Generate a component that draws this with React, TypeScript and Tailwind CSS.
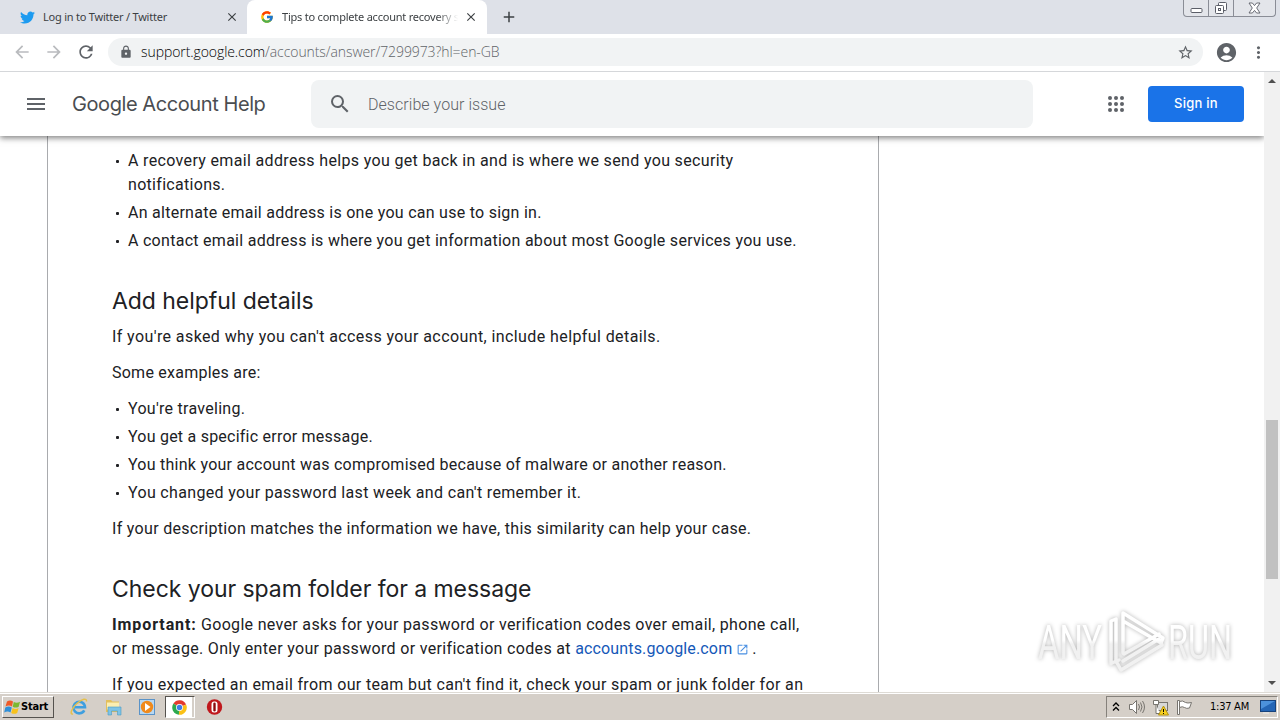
import { useState, type ReactNode } from "react";
import { FaTwitter } from "react-icons/fa";
import { FcGoogle } from "react-icons/fc";
import {
  MdAccountCircle,
  MdAdd,
  MdArrowBack,
  MdArrowForward,
  MdClose,
  MdLock,
  MdMenu,
  MdMoreVert,
  MdOpenInNew,
  MdRefresh,
  MdSearch,
  MdStarBorder,
} from "react-icons/md";

function WindowControls() {
  return (
    <div className="flex h-[17px] w-[93px] rounded-b-[4px] border border-t-0 border-[#8a8d96] bg-[#e3e5ea]">
      <div className="flex w-[25px] items-center justify-center border-r border-[#8a8d96]">
        <svg width="13" height="12" viewBox="0 0 13 12" fill="#fff" stroke="#5b5e68">
          <rect x="1" y="6.5" width="11" height="4" rx="1" />
        </svg>
      </div>
      <div className="flex w-[25px] items-center justify-center border-r border-[#8a8d96]">
        <svg width="14" height="14" viewBox="0 0 14 14" fill="#fff" stroke="#5b5e68">
          <rect x="4.5" y="1.5" width="8" height="8" rx="1" />
          <rect x="1.5" y="4.5" width="8" height="8" rx="1" />
          <rect x="4.5" y="7.5" width="2" height="2" />
        </svg>
      </div>
      <div className="flex flex-1 items-center justify-center">
        <svg width="13" height="12" viewBox="0 0 13 12" fill="#fff" stroke="#5b5e68" strokeWidth=".9">
          <path d="M1 1h3.400l2.100 2.600L8.600 1H12L8.700 6l3.300 5H8.600L6.500 8.400 4.400 11H1l3.300-5z" />
        </svg>
      </div>
    </div>
  );
}

function TabStrip() {
  return (
    <div className="flex h-[34px] bg-[#dee1e8] font-['Noto_Sans','Open_Sans',sans-serif] text-[11px] text-[#3c4043]">
      <div className="flex w-[247px] items-center pl-5">
        <FaTwitter className="size-[15px] text-[#1d9bf0]" />
        <span className="ml-2 w-[182px] whitespace-nowrap tracking-[-0.22px]">Log in to Twitter / Twitter</span>
        <MdClose className="size-[14px] text-[#3c4043]" />
      </div>
      <div className="flex w-[240px] items-center rounded-t-lg bg-white pl-[13px]">
        <FcGoogle className="size-[14px]" />
        <span className="ml-2 w-[176px] overflow-hidden whitespace-nowrap tracking-[-0.22px] [mask-image:linear-gradient(to_right,black_88%,transparent)]">
          Tips to complete account recovery st
        </span>
        <MdClose className="ml-[6px] size-[14px] text-[#3c4043]" />
      </div>
      <div className="flex flex-1 items-center pl-[13px]">
        <MdAdd className="size-[18px] text-[#3c4043]" />
      </div>
      <div className="mr-1">
        <WindowControls />
      </div>
    </div>
  );
}

function Toolbar() {
  return (
    <div className="flex h-[38px] items-center border-b border-[#d5d7da] bg-white pb-px text-[#5f6368]">
      <MdArrowBack className="ml-3 size-5 text-[#b9bbbe]" />
      <MdArrowForward className="ml-3 size-5 text-[#b9bbbe]" />
      <MdRefresh className="ml-3 size-5" />
      <div className="ml-3 flex h-7 w-[1095px] items-center rounded-full bg-[#f1f3f4] pr-[9px] pl-[11px]">
        <MdLock className="size-[14px]" />
        <span className="ml-2 flex-1 pb-px font-['Open_Sans','Noto_Sans',sans-serif] text-[14px] font-light tracking-[-0.08px]">
          <span className="text-[#000]">support.google.com</span>/accounts/answer/7299973?hl=en-GB
        </span>
        <MdStarBorder className="size-[17px]" />
      </div>
      <MdAccountCircle className="ml-3 size-[23px]" />
      <MdMoreVert className="ml-[11px] size-[19px]" />
    </div>
  );
}

function AppsIcon() {
  return (
    <svg width="24" height="24" viewBox="0 0 24 24" fill="#5f6368">
      {[6, 12, 18].map((y) => [6, 12, 18].map((x) => <circle key={`${x}-${y}`} cx={x} cy={y} r="2" />))}
    </svg>
  );
}

function HelpHeader() {
  const [query, setQuery] = useState("");

  return (
    <header className="relative z-10 flex h-16 shrink-0 items-center bg-white shadow-[0_2px_6px_rgba(0,0,0,0.5)]">
      <MdMenu className="ml-6 size-6 text-[#5f6368]" />
      <span className="ml-6 w-[239px] whitespace-nowrap font-[Inter,sans-serif] text-[20px] tracking-[-0.42px] text-[#4a4d51]">
        Google Account Help
      </span>
      <div className="flex h-12 w-[722px] items-center rounded-lg bg-[#f1f3f4] pl-[17px]">
        <MdSearch className="size-6 text-[#5f6368]" />
        <input
          value={query}
          onChange={(e) => setQuery(e.target.value)}
          placeholder="Describe your issue"
          className="ml-4 flex-1 bg-transparent pt-px font-[Roboto,sans-serif] text-[16px] font-light tracking-[0.05px] outline-none placeholder:text-[#5f6368]"
        />
      </div>
      <div className="ml-[71px]">
        <AppsIcon />
      </div>
      <button className="ml-5 h-9 w-24 rounded bg-[#1a73e8] font-[Inter,sans-serif] text-[13px] font-medium tracking-[0.25px] text-white">
        Sign in
      </button>
    </header>
  );
}

function Heading({ children }: { children: ReactNode }) {
  return (
    <h2 className="mt-8 mb-2 font-[Inter,sans-serif] text-[23px] leading-8 tracking-[-0.05px] whitespace-nowrap">
      {children}
    </h2>
  );
}

function Bullet({ children }: { children: ReactNode }) {
  return (
    <li className="flex">
      <span className="mt-[11px] mr-[9px] ml-1 size-[3px] shrink-0 rounded-[1px] bg-[#202124]" />
      <span>{children}</span>
    </li>
  );
}

function Article() {
  return (
    <article className="ml-[47px] w-[832px] shrink-0 border-x border-[#a9abae] pt-[13px] pl-16 font-[Roboto,sans-serif] text-[16px] leading-6 whitespace-nowrap text-[#202124]">
      <ul className="flex flex-col gap-1">
        <Bullet>
          <span className="tracking-[0.34px]">A recovery email address helps you get back in and is where we send you security</span>
          <br />
          <span className="tracking-[0.3px]">notifications.</span>
        </Bullet>
        <Bullet>
          <span className="tracking-[0.265px]">An alternate email address is one you can use to sign in.</span>
        </Bullet>
        <Bullet>
          <span className="tracking-[0.28px]">
            A contact email address is where you get information about most Google services you use.
          </span>
        </Bullet>
      </ul>

      <Heading>Add helpful details</Heading>
      <p className="tracking-[0.405px]">If you're asked why you can't access your account, include helpful details.</p>
      <p className="mt-3 tracking-[0.24px]">Some examples are:</p>
      <ul className="mt-3 flex flex-col gap-1">
        <Bullet>
          <span className="tracking-[0.28px]">You're traveling.</span>
        </Bullet>
        <Bullet>
          <span className="tracking-[0.23px]">You get a specific error message.</span>
        </Bullet>
        <Bullet>
          <span className="tracking-[0.255px]">
            You think your account was compromised because of malware or another reason.
          </span>
        </Bullet>
        <Bullet>
          <span className="tracking-[0.335px]">You changed your password last week and can't remember it.</span>
        </Bullet>
      </ul>
      <p className="mt-3 tracking-[0.31px]">
        If your description matches the information we have, this similarity can help your case.
      </p>

      <Heading>Check your spam folder for a message</Heading>
      <p>
        <span className="tracking-[0.32px]">
          <b className="tracking-[0.9px]">Important:</b> Google never asks for your password or verification codes over
          email, phone call,
        </span>
        <br />
        <span className="tracking-[0.33px]">or message. Only enter your password or verification codes at </span>
        <a href="#" className="tracking-[0.15px] text-[#1558b8]">
          accounts.google.com
          <MdOpenInNew className="mr-[3px] ml-1 inline size-[13px] text-[#4a90e2]" />
        </a>
        .
      </p>
      <p className="mt-3 tracking-[0.35px]">
        If you expected an email from our team but can't find it, check your spam or junk folder for an
      </p>
    </article>
  );
}

function Scrollbar() {
  return (
    <div className="flex w-4 flex-col items-center bg-[#f1f1f1]">
      <svg width="16" height="17" viewBox="0 0 16 17" fill="#505050">
        <path d="M4 11l4-4 4 4z" />
      </svg>
      <div className="mt-[331px] h-[159px] w-3 bg-[#c1c1c1]" />
      <svg className="mt-auto" width="16" height="17" viewBox="0 0 16 17" fill="#505050">
        <path d="M4 6l4 4 4-4z" />
      </svg>
    </div>
  );
}

function Watermark() {
  return (
    <svg
      className="absolute top-[600px] left-[1030px] drop-shadow-[0_0_2px_rgba(0,0,0,0.3)]"
      width="220"
      height="84"
      viewBox="0 -4 220 84"
    >
      <defs>
        <linearGradient id="fade" gradientUnits="userSpaceOnUse" x1="0" y1="36" x2="0" y2="40">
          <stop offset="0" stopColor="#fff" />
          <stop offset="1" stopColor="#f1f1f1" />
        </linearGradient>
      </defs>
      <g fontFamily="Roboto, sans-serif" fontSize="48" fill="url(#fade)">
        <text x="8" y="55" textLength="64" lengthAdjust="spacingAndGlyphs">
          ANY
        </text>
        <text x="138" y="55" textLength="64" lengthAdjust="spacingAndGlyphs">
          RUN
        </text>
      </g>
      <g fill="none" stroke="url(#fade)" strokeWidth="3.500" strokeLinejoin="round" strokeLinecap="round">
        <path d="M81 60V17l5-2v43M82 59l7-3" />
        <path d="M93 49V9l40 25-2 5-38-22" />
        <path d="M94 50l35-20M86 57l5 9 41-25-3-6-36 22" />
      </g>
    </svg>
  );
}

function StartLogo() {
  return (
    <svg width="17" height="16" viewBox="0 0 17 16">
      <path d="M3 2.500q3-2 6 0L8 7.500q-3-2-6.500 0z" fill="#ef5a28" />
      <path d="M9.800 3q3 1.500 6.200-.3l-1.300 5q-3 1.800-6 0z" fill="#7cb82f" />
      <path d="M1.300 8.500q3.300-2 6.500 0l-1.300 5q-3-2-6.300 0z" fill="#2f8fd8" />
      <path d="M8.600 9q3 1.800 6 0l-1.400 5q-3 1.700-6 0z" fill="#f8c21c" />
    </svg>
  );
}

function ExplorerIcon() {
  return (
    <svg width="18" height="18" viewBox="0 0 18 18" fill="none">
      <path d="M14.300 12.300A5.800 5.800 0 1 1 15 9.300H5" stroke="#3f9fdf" strokeWidth="2.600" />
      <path d="M3 16C-1 17 2 9.500 7 5.500 12 1 17-.5 16.500 3.500" stroke="#e5c04c" strokeWidth="1.500" />
    </svg>
  );
}

function FolderIcon() {
  return (
    <svg width="18" height="18" viewBox="0 0 18 18">
      <path d="M2 2h5l1.500 1.500H15V14H2z" fill="#e3bf5c" />
      <path d="M3 4.500h12v7H3z" fill="#fbeeb2" />
      <path d="M4 9h13v8h-3.500v-4H7.500v4H4z" fill="#7ec3e6" stroke="#4b9ac4" strokeWidth=".6" />
    </svg>
  );
}

function PlayerIcon() {
  return (
    <svg width="18" height="18" viewBox="0 0 18 18">
      <rect x="1.500" y="1.500" width="15" height="15" fill="#b8d8f2" stroke="#5a93c8" />
      <circle cx="9" cy="9" r="6.200" fill="#f08a1c" />
      <path d="M7 5l5.500 4L7 13z" fill="#fff" />
    </svg>
  );
}

function ChromeIcon() {
  return (
    <svg width="15" height="15" viewBox="0 0 16 16">
      <path d="M8 8L1.500 3.800A7.700 7.700 0 0 1 15 4.700z" fill="#e33b2e" />
      <path d="M8 8l7-3.300A7.700 7.700 0 0 1 7.300 15.700z" fill="#fbc116" />
      <path d="M8 8l-.7 7.700A7.700 7.700 0 0 1 1.500 3.800z" fill="#2da94f" />
      <circle cx="8" cy="8" r="3.700" fill="#fff" />
      <circle cx="8" cy="8" r="2.900" fill="#3f7ee8" />
    </svg>
  );
}

function OperaIcon() {
  return (
    <svg width="18" height="18" viewBox="0 0 18 18">
      <circle cx="8.500" cy="9" r="7.700" fill="#c0181d" />
      <rect x="5.500" y="3.500" width="6" height="11" rx="2.500" fill="#fff" />
      <rect x="7.300" y="4.500" width="2.400" height="9" rx="1.200" fill="#8d090d" />
    </svg>
  );
}

function Tray() {
  return (
    <div className="mt-[3px] mr-[2px] flex h-[22px] w-[172px] items-center border border-t-[#85817b] border-r-white border-b-white border-l-[#85817b] font-['DejaVu_Sans_Condensed','DejaVu_Sans',sans-serif] text-[11px] text-black">
      <svg className="ml-[5px] mb-px" width="8" height="10" viewBox="0 0 8 10" fill="none" stroke="#000" strokeWidth="1.300">
        <path d="M1 4l3-3 3 3M1 8.500l3-3 3 3" />
      </svg>
      <svg className="ml-2" width="18" height="16" viewBox="0 0 18 16" fill="none" stroke="#77746f">
        <path d="M1.500 5.500h3l4-4v13l-4-4h-3z" fill="#fff" />
        <path d="M10.500 5q2 3 0 6M12.500 3.500q3 4.500 0 9M14.500 2q4 6 0 12" />
      </svg>
      <svg className="ml-[6px]" width="18" height="17" viewBox="0 0 18 17" fill="none" stroke="#77746f">
        <rect x="5.500" y="3.500" width="10" height="8" fill="#d8d8d8" />
        <path d="M1.500 1.500h5v4h-5zM4 5.500v9h4" fill="#fff" />
        <path d="M11.500 7l5 9h-10z" fill="#f7cf1d" stroke="#b39212" />
        <path d="M11.500 10v3M11.500 14v1" stroke="#000" />
      </svg>
      <svg className="ml-[6px]" width="17" height="16" viewBox="0 0 17 16" fill="#fff" stroke="#77746f">
        <path d="M1.500 1.500h2v14h-2z" />
        <path d="M3.500 2.500q3-1.500 6 1 2 1 6 0l-2 5.500q-3 1-5-.5-2-1.500-5 0z" />
      </svg>
      <span className="ml-[17px] w-[42px] whitespace-nowrap tracking-[-0.25px]">1:37 AM</span>
      <svg className="ml-2" width="16" height="14" viewBox="0 0 16 14">
        <rect x=".5" y=".5" width="15" height="11" fill="#2465b5" stroke="#17427c" />
        <path d="M1 1h14L1 9z" fill="#4c91db" />
        <path d="M3 13h6" stroke="#eee" />
      </svg>
    </div>
  );
}

function Taskbar() {
  return (
    <footer className="flex h-7 border-t border-[#dedbd5] bg-[#d5cfc8] shadow-[inset_0_1px_0_#fff]">
      <button className="mt-[3px] ml-[2px] flex h-[22px] w-[52px] items-center border border-t-white border-r-[#55524e] border-b-[#55524e] border-l-white pl-px font-['DejaVu_Sans_Condensed','DejaVu_Sans',sans-serif] text-[11px] font-bold tracking-[-0.2px] text-black">
        <StartLogo />
        <span>Start</span>
      </button>
      <div className="mt-[5px] ml-4 flex gap-4">
        <ExplorerIcon />
        <FolderIcon />
        <PlayerIcon />
      </div>
      <div className="mt-[3px] ml-[9px] flex h-[22px] w-[30px] border border-t-[#55524e] border-r-white border-b-white border-l-[#55524e] bg-[#d5cfc8]">
        <div className="flex w-[26px] items-center justify-center bg-white">
          <ChromeIcon />
        </div>
      </div>
      <div className="mt-[5px] ml-[11px] flex-1">
        <OperaIcon />
      </div>
      <Tray />
    </footer>
  );
}

export default function App() {
  return (
    <div className="relative flex h-[720px] w-[1280px] flex-col overflow-hidden bg-white">
      <TabStrip />
      <Toolbar />
      <main className="flex h-[620px]">
        <div className="flex flex-1 flex-col overflow-hidden">
          <HelpHeader />
          <Article />
        </div>
        <Scrollbar />
      </main>
      <Taskbar />
      <Watermark />
    </div>
  );
}
